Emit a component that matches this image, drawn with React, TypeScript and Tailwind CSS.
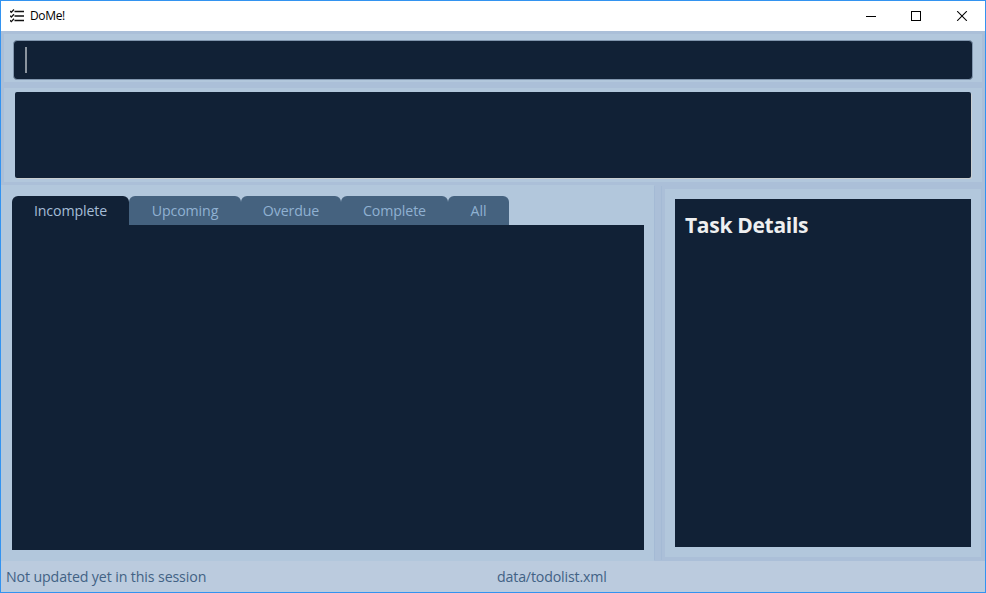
const tabs = [
  { label: 'Incomplete', box: 'w-[117px] bg-[#112136] text-[#a5bdd6]' },
  { label: 'Upcoming', box: 'w-[112px] bg-[#45627f] text-[#90b1d2]' },
  { label: 'Overdue', box: 'w-[100px] bg-[#45627f] text-[#90b1d2]' },
  { label: 'Complete', box: 'w-[107px] bg-[#45627f] text-[#90b1d2]' },
  { label: 'All', box: 'w-[61px] bg-[#45627f] text-[#90b1d2]' },
];

function TitleBar() {
  return (
    <header className="flex h-[30px] shrink-0 items-center bg-white pl-[9px]">
      <svg width="14" height="14" viewBox="0 0 14 14" fill="none" stroke="#111" className="-mt-px shrink-0">
        <path d="M4.5 2.5H14M4.5 7H14M4.5 11.5H14" strokeWidth="1.5" />
        <path d="M0 2l1.3 1.3L4 .5M0 6.7L1.3 8 4 5.2M0 11.3l1.3 1.3L4 9.8" strokeWidth="1.3" />
      </svg>
      <h1 className="ml-[6px] font-['Open_Sans','Noto_Sans',sans-serif] text-[12px] leading-4 tracking-[-0.35px] text-black">DoMe!</h1>
      <svg width="102" height="10" viewBox="0 0 102 10" fill="none" stroke="#000" className="mr-[17px] ml-auto">
        <path d="M0 5.5h10M45.5.5h9v9h-9z" shapeRendering="crispEdges" />
        <path d="M91.2.2l9.6 9.6M100.8.2l-9.6 9.6" strokeWidth="1.1" />
      </svg>
    </header>
  );
}

export default function App() {
  return (
    <div className="flex h-[593px] w-[986px] flex-col overflow-hidden border border-[#3393f0] bg-[#abbfd8] font-['Open_Sans','Noto_Sans',sans-serif] text-[14.2px]">
      <TitleBar />
      <div className="mx-[3px] mt-[3px] h-[48px] shrink-0 bg-[#b2c7dc] px-[9px] pt-[6px]">
        <div className="flex h-[40px] items-center rounded-[4px] border border-[#8196ae] bg-[#112136] pl-[11px]">
          <div className="h-[26px] w-[2px] bg-[#8b949f]" />
        </div>
      </div>
      <div className="mx-[3px] mt-[6px] h-[94px] shrink-0 bg-[#b2c7dc] pt-[4px] pr-[11px] pl-[11px]">
        <div className="h-[86px] rounded-[2px] bg-[#112136] shadow-[1px_1px_0_#c9ced0]" />
      </div>
      <main className="mt-[3px] flex h-[376px] shrink-0">
        <section className="w-[653px] shrink-0 bg-[#b2c7dc] pt-[11px] pl-[11px]">
          <div className="flex h-[29px]">
            {tabs.map((tab) => (
              <div key={tab.label} className={`flex items-center justify-center rounded-t-[6px] ${tab.box}`}>
                <span className="leading-5 tracking-[-0.12px] whitespace-nowrap">{tab.label}</span>
              </div>
            ))}
          </div>
          <div className="h-[325px] w-[632px] bg-[#112136]" />
        </section>
        <div className="mt-px h-[374px] w-[8px] shrink-0 border-x border-[#a4bad5]" />
        <aside className="mt-[4px] ml-[3px] h-[368px] w-[316px] shrink-0 bg-[#b2c7dc] p-[10px]">
          <div className="h-[348px] bg-[#112136] px-[10px] pt-[11px]">
            <h2 className="text-[21px] leading-[30px] font-bold tracking-[-0.3px] whitespace-nowrap text-[#eeeff0]">Task Details</h2>
          </div>
        </aside>
      </main>
      <footer className="flex flex-1 items-center bg-[#bbcbde] pt-px pl-[5px] leading-5 text-[#426285]">
        <span className="w-[491px] tracking-[-0.12px] whitespace-nowrap">Not updated yet in this session</span>
        <span className="tracking-[-0.16px] whitespace-nowrap">data/todolist.xml</span>
      </footer>
    </div>
  );
}
